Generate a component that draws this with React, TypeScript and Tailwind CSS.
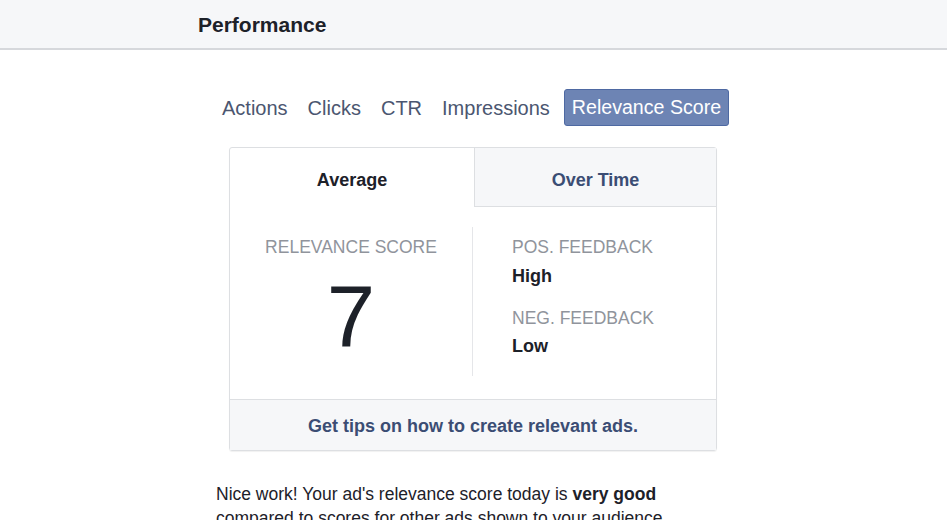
const font = { fontFamily: '"Liberation Sans", Arial, sans-serif' };

const tabs = ["Actions", "Clicks", "CTR", "Impressions"];

export default function App() {
  return (
    <div className="w-[947px] h-[520px] overflow-hidden bg-white" style={font}>
      {/* Header */}
      <div className="h-[50px] bg-[#f6f7f9] border-b-2 border-[#d6d8dc] flex items-center pl-[198px]">
        <h1 className="text-[21px] font-bold text-[#1d2129] leading-none">Performance</h1>
      </div>

      {/* Metric tabs */}
      <div className="flex items-center gap-[20px] mt-[39px] pl-[222px]">
        {tabs.map((t) => (
          <span key={t} className="text-[20px] text-[#4b5670] leading-none">
            {t}
          </span>
        ))}
        <span className="ml-[-6px] h-[37px] px-[7px] flex items-center bg-[#6d84b4] border border-[#4e69a2] rounded-[3px] text-[19.6px] text-white leading-none">
          Relevance Score
        </span>
      </div>

      {/* Card */}
      <div className="w-[488px] ml-[229px] mt-[21px] border border-[#dddfe2] rounded-[3px] shadow-[0_1px_1px_rgba(0,0,0,0.06)]">
        <div className="flex h-[59px]">
          <div className="w-[244px] flex items-center justify-center pt-[6px] text-[18px] font-bold text-[#1d2129]">
            Average
          </div>
          <div className="flex-1 flex items-center justify-center pt-[6px] bg-[#f6f7f9] border-l border-b border-[#dddfe2] text-[18px] font-bold text-[#3b4d74]">
            Over Time
          </div>
        </div>

        <div className="flex pt-[20px] pb-[23px]">
          <div className="w-[243px] border-r border-[#e5e6e9] flex flex-col items-center pt-[10px] h-[149px]">
            <div className="text-[17.5px] leading-[20px] text-[#90949c]">RELEVANCE SCORE</div>
            <div className="text-[87px] leading-none text-[#1d2129] mt-[16px]">7</div>
          </div>
          <div className="flex flex-col pl-[39px] pt-[10px]">
            <div className="text-[17.5px] leading-[20px] text-[#90949c]">POS. FEEDBACK</div>
            <div className="text-[18px] leading-[22px] font-bold text-[#1d2129] mt-[8px]">High</div>
            <div className="text-[17.5px] leading-[20px] text-[#90949c] mt-[21px]">NEG. FEEDBACK</div>
            <div className="text-[18px] leading-[22px] font-bold text-[#1d2129] mt-[7px]">Low</div>
          </div>
        </div>

        <div className="h-[51px] bg-[#f6f7f9] border-t border-[#dddfe2] flex items-center justify-center pt-[2px] text-[18px] font-bold text-[#3b4d74]">
          Get tips on how to create relevant ads.
        </div>
      </div>

      {/* Summary */}
      <p className="ml-[216px] mt-[31px] text-[17.5px] leading-[24px] text-[#1d2129]">
        Nice work! Your ad's relevance score today is <b>very good</b>
        <br />
        compared to scores for other ads shown to your audience.
      </p>
    </div>
  );
}
